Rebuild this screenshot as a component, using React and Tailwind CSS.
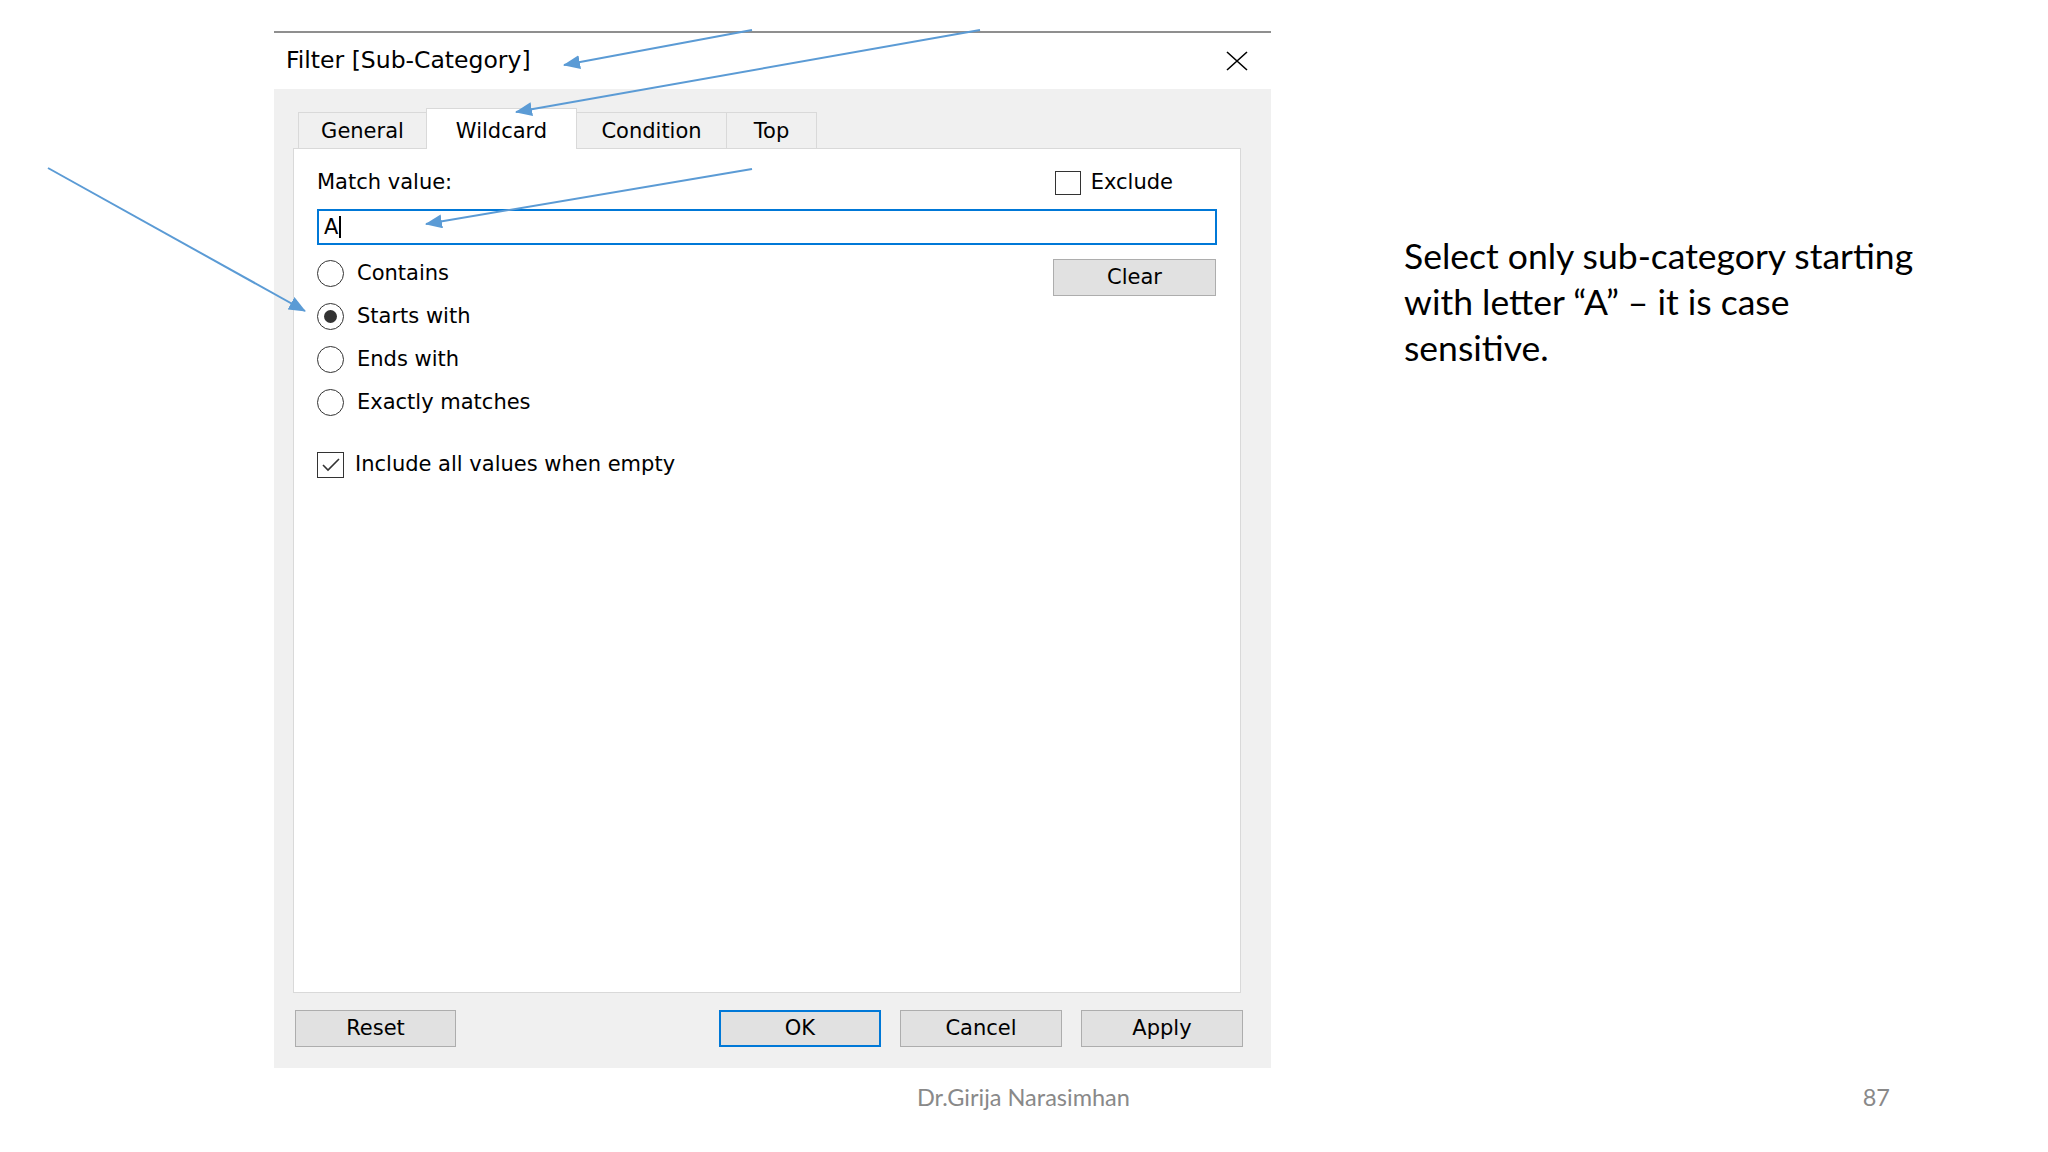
import React from "react";

const dlgFont = { fontFamily: '"DejaVu Sans", Verdana, sans-serif' };

function Radio({ checked, label }) {
  return (
    <div className="flex items-center h-[29px]">
      <div className="w-[27px] h-[27px] rounded-full border-[1.5px] border-[#333] bg-white flex items-center justify-center">
        {checked && <div className="w-[13px] h-[13px] rounded-full bg-[#333]" />}
      </div>
      <span className="ml-[13px] text-[21px] text-black leading-none">{label}</span>
    </div>
  );
}

function Btn({ children, w = "w-[162px]", primary }) {
  return (
    <div
      className={
        "h-[37px] flex items-center justify-center text-[21px] text-black bg-[#e1e1e1] " +
        w +
        (primary ? " border-2 border-[#0078d7]" : " border border-[#adadad]")
      }
    >
      {children}
    </div>
  );
}

function Tab({ label, selected, w }) {
  if (selected) {
    return (
      <div
        className={
          "relative z-10 -mb-px h-[41px] -ml-px bg-white border border-b-0 border-[#d9d9d9] flex items-start justify-center pt-[7px] text-[21px] text-black " +
          w
        }
      >
        {label}
      </div>
    );
  }
  return (
    <div
      className={
        "h-[36px] -ml-px bg-[#f0f0f0] border border-b-0 border-[#d9d9d9] flex items-center justify-center pt-[2px] text-[21px] text-black " +
        w
      }
    >
      {label}
    </div>
  );
}

function Dialog() {
  return (
    <div className="w-[997px] flex flex-col" style={dlgFont}>
      <div className="h-[2px] bg-[#8f8f8f]" />
      <div className="h-[56px] bg-white flex items-center pl-[12px] pr-[23px]">
        <span className="text-[23.5px] text-black">Filter [Sub-Category]</span>
        <svg className="ml-auto" width="22" height="20" viewBox="0 0 22 20">
          <path d="M1 1 L21 19 M21 1 L1 19" stroke="#000" strokeWidth="1.6" fill="none" />
        </svg>
      </div>
      <div className="h-[979px] bg-[#f0f0f0] flex flex-col pt-[19px] pl-[19px] pr-[30px] pb-[21px]">
        <div className="h-[40px] flex items-end pl-[6px]">
          <Tab label="General" w="w-[129px]" />
          <Tab label="Wildcard" w="w-[151px]" selected />
          <Tab label="Condition" w="w-[151px]" />
          <Tab label="Top" w="w-[91px]" />
        </div>
        <div className="h-[845px] bg-white border border-[#d9d9d9] flex flex-col px-[23px]">
          <div className="mt-[20px] h-[28px] flex items-center">
            <span className="text-[21px] text-black">Match value:</span>
            <div className="ml-auto mr-[44px] flex items-center">
              <div className="w-[26px] h-[24px] border-[1.5px] border-[#333] bg-white" />
              <span className="ml-[10px] text-[21px] text-black">Exclude</span>
            </div>
          </div>
          <div className="mt-[12px] h-[36px] border-2 border-[#0078d7] bg-white flex items-center pl-[5px]">
            <span className="text-[21px] text-black leading-none">A</span>
            <div className="w-[1.5px] h-[22px] bg-black ml-[1px]" />
          </div>
          <div className="mt-[14px] flex items-start">
            <div className="flex flex-col gap-[14px]">
              <Radio label="Contains" />
              <Radio label="Starts with" checked />
              <Radio label="Ends with" />
              <Radio label="Exactly matches" />
            </div>
            <div className="ml-auto mr-[1px] mt-[0px]">
              <Btn w="w-[163px]">Clear</Btn>
            </div>
          </div>
          <div className="mt-[33px] flex items-center h-[29px]">
            <div className="w-[27px] h-[26px] border-[1.5px] border-[#333] bg-white flex items-center justify-center">
              <svg width="20" height="16" viewBox="0 0 20 16">
                <path d="M2 8 L7 13 L18 2" stroke="#333" strokeWidth="1.6" fill="none" />
              </svg>
            </div>
            <span className="ml-[11px] text-[21px] text-black">Include all values when empty</span>
          </div>
        </div>
        <div className="mt-[17px] flex items-center pl-[2px] -mr-[2px]">
          <Btn w="w-[161px]">Reset</Btn>
          <div className="ml-auto flex gap-[19px]">
            <Btn primary>OK</Btn>
            <Btn>Cancel</Btn>
            <Btn>Apply</Btn>
          </div>
        </div>
      </div>
    </div>
  );
}

function Arrows() {
  const c = "#5b9bd5";
  const lines = [
    [752, 30, 564, 65],
    [980, 30, 516, 112],
    [752, 169, 426, 224],
    [48, 168, 305, 311],
  ];
  return (
    <svg className="absolute left-0 top-0 z-20 pointer-events-none" width="2048" height="1152" viewBox="0 0 2048 1152">
      <defs>
        <marker id="ah" markerUnits="userSpaceOnUse" markerWidth="18" markerHeight="14" refX="16" refY="7" orient="auto">
          <path d="M0 0 L17 7 L0 14 Z" fill={c} />
        </marker>
      </defs>
      {lines.map(([x1, y1, x2, y2], i) => (
        <line key={i} x1={x1} y1={y1} x2={x2} y2={y2} stroke={c} strokeWidth="2" markerEnd="url(#ah)" />
      ))}
    </svg>
  );
}

export default function App() {
  return (
    <div className="relative w-[2048px] h-[1152px] bg-white overflow-hidden flex flex-col">
      <div className="flex pt-[31px] pl-[274px]">
        <Dialog />
        <div
          className="ml-[133px] mt-[202px] text-[35.5px] leading-[46px] text-black"
          style={{ fontFamily: 'Lato, "Open Sans", sans-serif' }}
        >
          Select only sub-category starting
          <br />
          with letter “A” – it is case
          <br />
          sensitive.
        </div>
      </div>
      <div
        className="mt-[16px] flex items-center h-[28px] text-[23.5px] text-[#898989]"
        style={{ fontFamily: 'Lato, "Open Sans", sans-serif' }}
      >
        <span className="ml-[917px]">Dr.Girija Narasimhan</span>
        <span className="ml-auto mr-[158px]">87</span>
      </div>
      <Arrows />
    </div>
  );
}
